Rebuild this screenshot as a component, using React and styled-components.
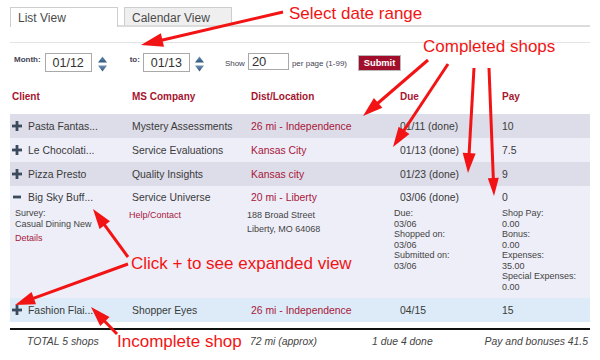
import React from "react";
import styled, { createGlobalStyle } from "styled-components";

const GlobalStyle = createGlobalStyle`
  body {
    margin: 0;
    background: #fff;
    font-family: "Liberation Sans", Arial, sans-serif;
    color: #333;
  }
`;

const Page = styled.div`
  position: relative;
  width: 600px;
  height: 360px;
  padding: 7px 10px 0;
  box-sizing: border-box;
  overflow: hidden;
`;

const Tabs = styled.div`
  display: flex;
  align-items: flex-start;
  gap: 6px;
  height: 18px;
  border-bottom: 2px solid #dcdcdc;
`;

const Tab = styled.div`
  width: 108px;
  height: ${(p) => (p.$active ? "20px" : "18px")};
  box-sizing: border-box;
  padding: 3px 0 0 7px;
  border: 1px solid #cdcdcd;
  border-bottom: none;
  background: ${(p) => (p.$active ? "#fff" : "#efefef")};
  font-size: 12px;
  color: #4a4a4a;
`;

const Divider = styled.div`
  margin-top: 15px;
  height: 1px;
  background: #e4e4e4;
`;

const FilterRow = styled.div`
  display: flex;
  align-items: flex-start;
  margin-top: 10px;
  height: 19px;
`;

const Group = styled.div`
  display: flex;
  align-items: flex-start;
  gap: ${(p) => p.$gap || 4}px;
  margin-left: ${(p) => p.$offset || 0}px;
`;

const SmallLabel = styled.span`
  font-size: 8px;
  font-weight: ${(p) => (p.$bold ? "bold" : "normal")};
  color: #445;
  margin-top: ${(p) => p.$top || 1}px;
`;

const DateInput = styled.div`
  width: ${(p) => p.$w || 47}px;
  height: ${(p) => p.$h || 19}px;
  box-sizing: border-box;
  border: 1px solid #a9a9a9;
  font-size: ${(p) => p.$size || 12.5}px;
  color: #333;
  display: flex;
  align-items: center;
  justify-content: ${(p) => (p.$left ? "flex-start" : "center")};
  padding-left: ${(p) => (p.$left ? 3 : 0)}px;
`;

const SpinnerBox = styled.svg`
  margin-top: 3px;
  margin-left: 2px;
`;

const Submit = styled.div`
  margin-left: 11px;
  margin-top: 2px;
  width: 43px;
  height: 16px;
  box-sizing: border-box;
  background: #a10e2b;
  border: 1px solid #b9b9b9;
  color: #fff;
  font-weight: bold;
  font-size: 9.3px;
  display: flex;
  align-items: center;
  justify-content: center;
`;

const cols = "120px 119px 149px 102px 1fr";

const Header = styled.div`
  display: grid;
  grid-template-columns: ${cols};
  margin: 17px 0 11px;
  height: 14px;
  align-items: center;
  font-size: 10px;
  font-weight: bold;
  color: #a5152f;
  & > * {
    padding-left: 2px;
  }
`;

const rowBg = {
  dark: "#dddde9",
  light: "#eeeef8",
  blue: "#dcebf7",
};

const Row = styled.div`
  background: ${(p) => rowBg[p.$tone]};
`;

const MainLine = styled.div`
  display: grid;
  grid-template-columns: ${cols};
  height: ${(p) => p.$h || 24}px;
  align-items: center;
  font-size: 10.4px;
  color: #3a3a3a;
`;

const Cell = styled.div`
  display: flex;
  align-items: center;
  gap: 6px;
  padding-left: 2px;
  color: ${(p) => (p.$red ? "#a8173a" : "inherit")};
  white-space: nowrap;
`;

const Details = styled.div`
  display: grid;
  grid-template-columns: 117px 118px 147px 108px 1fr;
  padding-bottom: 6px;
  font-size: 9px;
  color: #444;
`;

const DetailCol = styled.div`
  padding-left: ${(p) => p.$pad || 2}px;
  padding-top: ${(p) => p.$top || 0}px;
  line-height: ${(p) => p.$lh || 10.5}px;
  display: flex;
  flex-direction: column;
`;

const RedLink = styled.span`
  color: #a8173a;
  margin-top: ${(p) => p.$mt || 0}px;
`;

const Footer = styled.div`
  margin-top: 6px;
  border-top: 2px solid #111;
  height: 22px;
  display: grid;
  grid-template-columns: 240px 122px 100px 1fr;
  align-items: center;
  font-size: 10.4px;
  font-style: italic;
  color: #444;
`;

const FootCell = styled.span`
  padding-left: ${(p) => p.$pad || 0}px;
  justify-self: ${(p) => (p.$end ? "end" : "start")};
  padding-right: ${(p) => (p.$end ? 2 : 0)}px;
  white-space: nowrap;
`;

const Overlay = styled.svg`
  position: absolute;
  left: 0;
  top: 0;
  pointer-events: none;
`;

const Note = styled.div`
  position: absolute;
  left: ${(p) => p.$x}px;
  top: ${(p) => p.$y}px;
  font-family: "Liberation Sans", Arial, sans-serif;
  font-size: 17px;
  line-height: 17px;
  color: #f21414;
  white-space: nowrap;
`;

function Plus() {
  return (
    <svg width="10" height="10" viewBox="0 0 10 10">
      <rect x="0" y="3.6" width="10" height="2.8" fill="#3b4b5c" />
      <rect x="3.6" y="0" width="2.8" height="10" fill="#3b4b5c" />
    </svg>
  );
}

function Minus() {
  return (
    <svg width="10" height="10" viewBox="0 0 10 10">
      <rect x="1" y="3.6" width="8" height="2.8" fill="#3b4b5c" />
    </svg>
  );
}

function Spinner() {
  return (
    <SpinnerBox width="9" height="16" viewBox="0 0 9 16">
      <defs>
        <linearGradient id="sp" x1="0" y1="0" x2="0" y2="1">
          <stop offset="0" stopColor="#6d8fb2" />
          <stop offset="1" stopColor="#2f577f" />
        </linearGradient>
      </defs>
      <polygon points="0,6.5 4.5,0.5 9,6.5" fill="url(#sp)" />
      <polygon points="0,9.5 4.5,15.5 9,9.5" fill="url(#sp)" />
    </SpinnerBox>
  );
}

function Arrow({ x1, y1, x2, y2, len = 20, half = 6.5 }) {
  const dx = x2 - x1;
  const dy = y2 - y1;
  const d = Math.hypot(dx, dy);
  const ux = dx / d;
  const uy = dy / d;
  const bx = x2 - ux * len;
  const by = y2 - uy * len;
  const pts = [
    `${x2},${y2}`,
    `${bx - uy * half},${by + ux * half}`,
    `${bx + uy * half},${by - ux * half}`,
  ].join(" ");
  return (
    <g>
      <line x1={x1} y1={y1} x2={bx + ux * 2} y2={by + uy * 2} stroke="#f21414" strokeWidth="3" />
      <polygon points={pts} fill="#f21414" />
    </g>
  );
}

const rows = [
  { client: "Pasta Fantas...", company: "Mystery Assessments", dist: "26 mi - Independence", due: "01/11 (done)", pay: "10", tone: "dark" },
  { client: "Le Chocolati...", company: "Service Evaluations", dist: "Kansas City", due: "01/13 (done)", pay: "7.5", tone: "light" },
  { client: "Pizza Presto", company: "Quality Insights", dist: "Kansas city", due: "01/23 (done)", pay: "9", tone: "dark" },
];

export default function App() {
  return (
    <Page>
      <GlobalStyle />
      <Tabs>
        <Tab $active>List View</Tab>
        <Tab>Calendar View</Tab>
      </Tabs>
      <Divider />

      <FilterRow>
        <Group $offset={4} $gap={4}>
          <SmallLabel $bold $top={2}>Month:</SmallLabel>
          <DateInput>01/12</DateInput>
          <Spinner />
        </Group>
        <Group $offset={23} $gap={3}>
          <SmallLabel $bold $top={2}>to:</SmallLabel>
          <DateInput>01/13</DateInput>
          <Spinner />
        </Group>
        <Group $offset={21} $gap={3}>
          <SmallLabel $top={6}>Show</SmallLabel>
          <DateInput $w={41} $h={17} $size={13} $left>20</DateInput>
          <SmallLabel $top={6}>per page (1-99)</SmallLabel>
        </Group>
        <Submit>Submit</Submit>
      </FilterRow>

      <Header>
        <span>Client</span>
        <span>MS Company</span>
        <span>Dist/Location</span>
        <span>Due</span>
        <span>Pay</span>
      </Header>

      {rows.map((r) => (
        <Row key={r.client} $tone={r.tone}>
          <MainLine>
            <Cell><Plus />{r.client}</Cell>
            <Cell>{r.company}</Cell>
            <Cell $red>{r.dist}</Cell>
            <Cell>{r.due}</Cell>
            <Cell>{r.pay}</Cell>
          </MainLine>
        </Row>
      ))}

      <Row $tone="light">
        <MainLine $h={22}>
          <Cell><Minus />Big Sky Buff...</Cell>
          <Cell>Service Universe</Cell>
          <Cell $red>20 mi - Liberty</Cell>
          <Cell>03/06 (done)</Cell>
          <Cell>0</Cell>
        </MainLine>
        <Details>
          <DetailCol $pad={5}>
            <span>Survey:</span>
            <span>Casual Dining New</span>
            <RedLink $mt={3.5}>Details</RedLink>
          </DetailCol>
          <DetailCol $top={2}>
            <RedLink>Help/Contact</RedLink>
          </DetailCol>
          <DetailCol $lh={14}>
            <span>188 Broad Street</span>
            <span>Liberty, MO 64068</span>
          </DetailCol>
          <DetailCol>
            <span>Due:</span>
            <span>03/06</span>
            <span>Shopped on:</span>
            <span>03/06</span>
            <span>Submitted on:</span>
            <span>03/06</span>
          </DetailCol>
          <DetailCol>
            <span>Shop Pay:</span>
            <span>0.00</span>
            <span>Bonus:</span>
            <span>0.00</span>
            <span>Expenses:</span>
            <span>35.00</span>
            <span>Special Expenses:</span>
            <span>0.00</span>
          </DetailCol>
        </Details>
      </Row>

      <Row $tone="blue">
        <MainLine>
          <Cell><Plus />Fashion Flai...</Cell>
          <Cell>Shopper Eyes</Cell>
          <Cell $red>26 mi - Independence</Cell>
          <Cell>04/15</Cell>
          <Cell>15</Cell>
        </MainLine>
      </Row>

      <Footer>
        <FootCell $pad={17}>TOTAL 5 shops</FootCell>
        <FootCell>72 mi (approx)</FootCell>
        <FootCell>1 due 4 done</FootCell>
        <FootCell $end>Pay and bonuses 41.5</FootCell>
      </Footer>

      <Overlay width="600" height="360" viewBox="0 0 600 360">
        <Arrow x1={283} y1={12} x2={141} y2={45} len={22} half={7} />
        <Arrow x1={428} y1={60} x2={363} y2={116} />
        <Arrow x1={448} y1={64} x2={393} y2={147} />
        <Arrow x1={474} y1={68} x2={468} y2={173} />
        <Arrow x1={489} y1={68} x2={494} y2={196} len={18} half={5.5} />
        <Arrow x1={128} y1={257} x2={93} y2={209} />
        <Arrow x1={128} y1={264} x2={15} y2={305} />
        <Arrow x1={117} y1={334} x2={91} y2={307} />
      </Overlay>
      <Note $x={289} $y={5}>Select date range</Note>
      <Note $x={423} $y={38}>Completed shops</Note>
      <Note $x={131} $y={255}>Click + to see expanded view</Note>
      <Note $x={117} $y={333}>Incomplete shop</Note>
    </Page>
  );
}
